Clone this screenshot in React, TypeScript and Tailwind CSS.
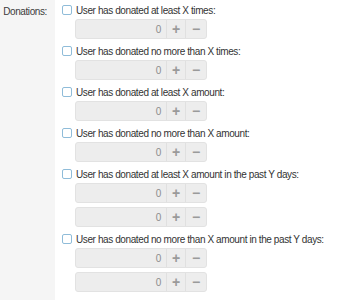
import { useState } from "react";

type Rule = {
    id: string;
    label: string;
    inputs: number;
};

const rules: Rule[] = [
    { id: "min_times", label: "User has donated at least X times:", inputs: 1 },
    { id: "max_times", label: "User has donated no more than X times:", inputs: 1 },
    { id: "min_amount", label: "User has donated at least X amount:", inputs: 1 },
    { id: "max_amount", label: "User has donated no more than X amount:", inputs: 1 },
    { id: "min_amount_days", label: "User has donated at least X amount in the past Y days:", inputs: 2 },
    { id: "max_amount_days", label: "User has donated no more than X amount in the past Y days:", inputs: 2 },
];

// числовое поле с кнопками +/−
const Spinner = ({ value, onChange }: { value: number; onChange: (v: number) => void }) => (
    <div className="flex h-[20px] w-[132px] rounded-[3px] border border-[#e2e2e2] bg-[#ededed] text-[#8c8c8c]">
        <div className="flex flex-1 items-center justify-end pr-[5px] text-[10px]">{value}</div>
        <button
            onClick={() => onChange(value + 1)}
            className="flex w-[19px] items-center justify-center border-l border-[#e0e0e0] text-[14px] font-bold leading-none text-[#9a9a9a]"
        >
            +
        </button>
        <button
            onClick={() => onChange(Math.max(0, value - 1))}
            className="flex w-[21px] items-center justify-center border-l border-[#e0e0e0] text-[14px] font-bold leading-none text-[#9a9a9a]"
        >
            −
        </button>
    </div>
);

export default function App() {
    const [values, setValues] = useState<Record<string, number>>({});
    const [checked, setChecked] = useState<Record<string, boolean>>({});

    const setVal = (key: string, v: number) => setValues(prev => ({ ...prev, [key]: v }));

    return (
        <div className="flex h-[300px] w-[343px] font-['Liberation_Sans',Arial,sans-serif] text-[10px] tracking-[-0.4px] text-[#333]">
            <div className="w-[55px] shrink-0 whitespace-nowrap bg-[#f5f5f5] pr-[8px] pt-[4px] text-right text-[#3c3c3c]">
                Donations:
            </div>
            <div className="flex flex-1 flex-col gap-[3px] pl-[7px] pt-[1px]">
                {rules.map(r => (
                    <div key={r.id} className="flex flex-col">
                        <label className="flex h-[18px] items-center gap-[4px]">
                            <span
                                onClick={() => setChecked(prev => ({ ...prev, [r.id]: !prev[r.id] }))}
                                className={`h-[10px] w-[10px] shrink-0 rounded-[2px] border border-[#8fbcd9] ${
                                    checked[r.id] ? "bg-[#8fbcd9]" : "bg-white"
                                }`}
                            />
                            <span className="whitespace-nowrap">{r.label}</span>
                        </label>
                        <div className="flex flex-col gap-[4px] pl-[13px]">
                            {Array.from({ length: r.inputs }).map((_, i) => (
                                <Spinner
                                    key={i}
                                    value={values[`${r.id}_${i}`] ?? 0}
                                    onChange={v => setVal(`${r.id}_${i}`, v)}
                                />
                            ))}
                        </div>
                    </div>
                ))}
            </div>
        </div>
    );
}
